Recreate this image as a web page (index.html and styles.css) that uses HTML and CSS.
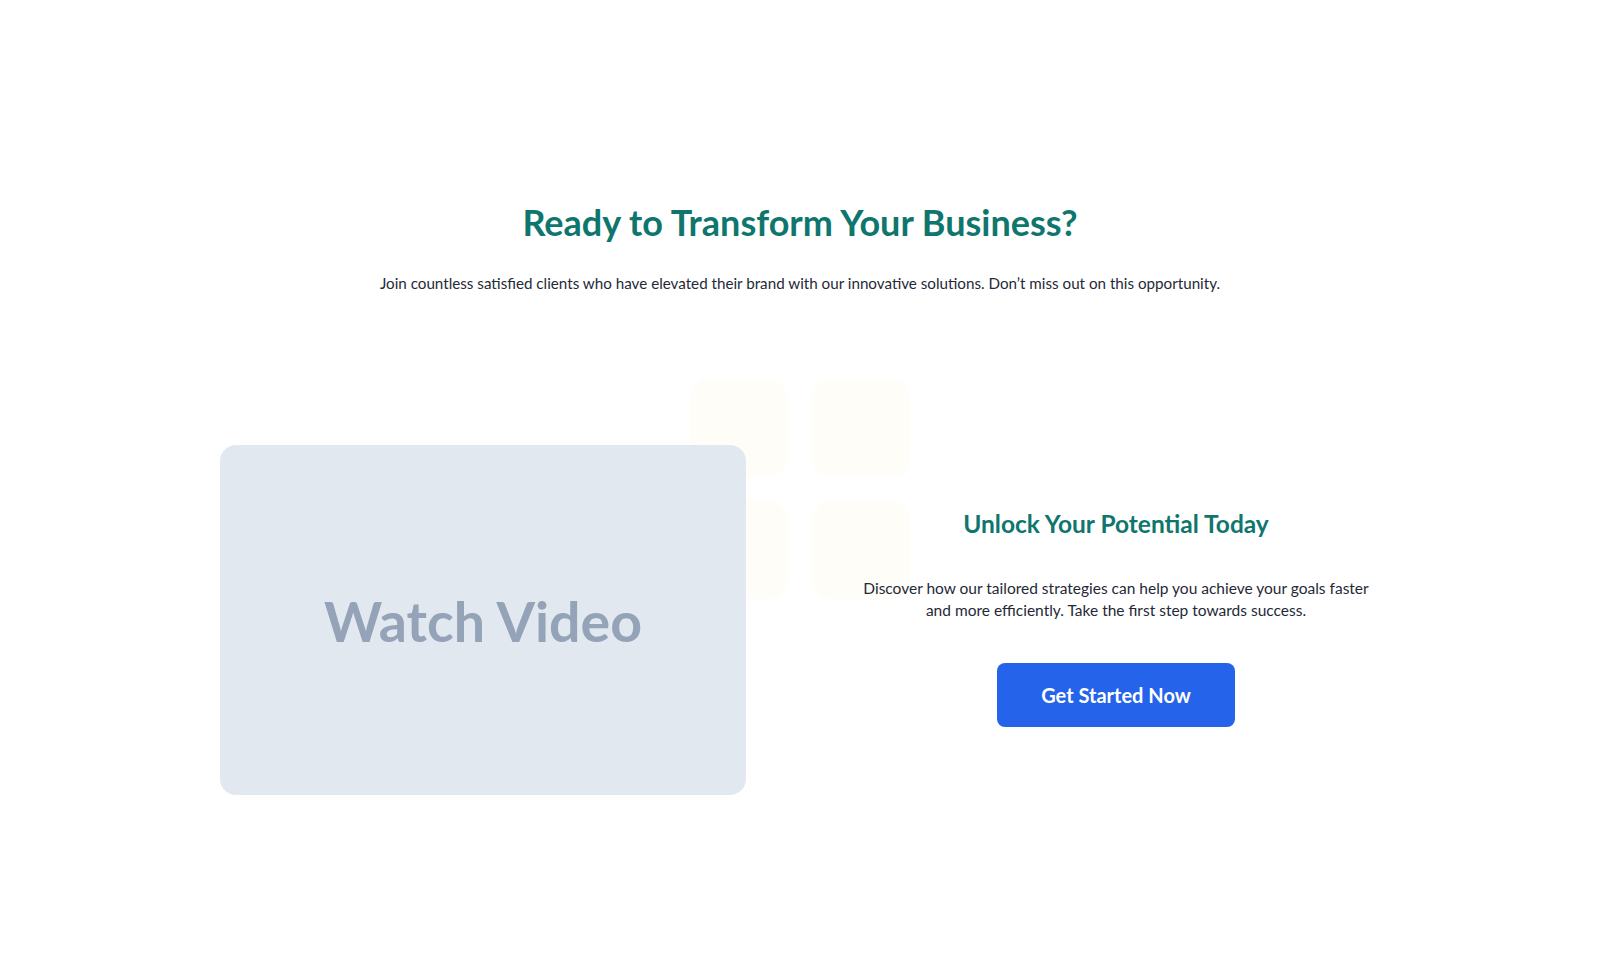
FILE: index.html
```html
<!DOCTYPE html>
<html lang="en">
<head>
<meta charset="utf-8">
<title>Ready to Transform Your Business?</title>
<link rel="stylesheet" href="styles.css">
</head>
<body>
<section class="cta">
  <header class="cta-head">
    <h1 class="cta-title">Ready to Transform Your Business?</h1>
    <p class="cta-sub">Join countless satisfied clients who have elevated their brand with our innovative solutions. Don’t miss out on this opportunity.</p>
  </header>
  <div class="cta-row">
    <div class="deco">
      <span class="deco-sq"></span><span class="deco-sq"></span>
      <span class="deco-sq"></span><span class="deco-sq"></span>
    </div>
    <div class="video">
      <span class="video-label">Watch Video</span>
    </div>
    <div class="cta-body">
      <h2 class="cta-body-title">Unlock Your Potential Today</h2>
      <p class="cta-body-text">Discover how our tailored strategies can help you achieve your goals faster and more efficiently. Take the first step towards success.</p>
      <a class="cta-btn" href="#">Get Started Now</a>
    </div>
  </div>
</section>
</body>
</html>
```
FILE: styles.css
```css
* { box-sizing: border-box; }
html, body { margin: 0; padding: 0; background: #ffffff; }
body {
  font-family: "Lato", "Noto Sans", sans-serif;
  color: #1f2937;
  width: 1600px;
  height: 978px;
  overflow: hidden;
}
.cta { padding-top: 200px; }
.cta-head { text-align: center; }
.cta-title {
  margin: 0;
  font-size: 36px;
  line-height: 44px;
  font-weight: 700;
  color: #0f766e;
}
.cta-sub {
  margin: 28px 0 0;
  font-size: 15.2px;
  line-height: 22px;
  color: #1f2937;
}
.cta-row {
  position: relative;
  margin: 151px 0 0 220px;
  width: 1186px;
  display: flex;
  align-items: center;
}
.deco {
  position: absolute;
  left: 470px;
  top: -66px;
  display: grid;
  grid-template-columns: 98px 98px;
  gap: 24px;
  z-index: 0;
}
.deco-sq {
  display: block;
  width: 98px;
  height: 98px;
  border-radius: 20px;
  background: #fefdf8;
}
.video {
  position: relative;
  z-index: 1;
  width: 526px;
  height: 350px;
  border-radius: 16px;
  background: #e2e8f0;
  display: flex;
  align-items: center;
  justify-content: center;
}
.video-label {
  font-family: "Lato", sans-serif;
  font-weight: 700;
  font-size: 55.5px;
  color: #94a3b8;
}
.cta-body {
  position: relative;
  z-index: 1;
  margin-left: auto;
  width: 580px;
  padding-bottom: 6px;
  display: flex;
  flex-direction: column;
  align-items: center;
  text-align: center;
}
.cta-body-title {
  margin: 0;
  font-size: 24.5px;
  line-height: 32px;
  font-weight: 700;
  color: #0f766e;
}
.cta-body-text {
  margin: 37px 0 0;
  max-width: 520px;
  font-size: 15.5px;
  line-height: 22px;
  color: #1f2937;
}
.cta-btn {
  margin-top: 42px;
  display: flex;
  align-items: center;
  justify-content: center;
  width: 238px;
  height: 64px;
  border-radius: 8px;
  background: #2563eb;
  color: #ffffff;
  font-size: 20px;
  font-weight: 700;
  text-decoration: none;
}
```
